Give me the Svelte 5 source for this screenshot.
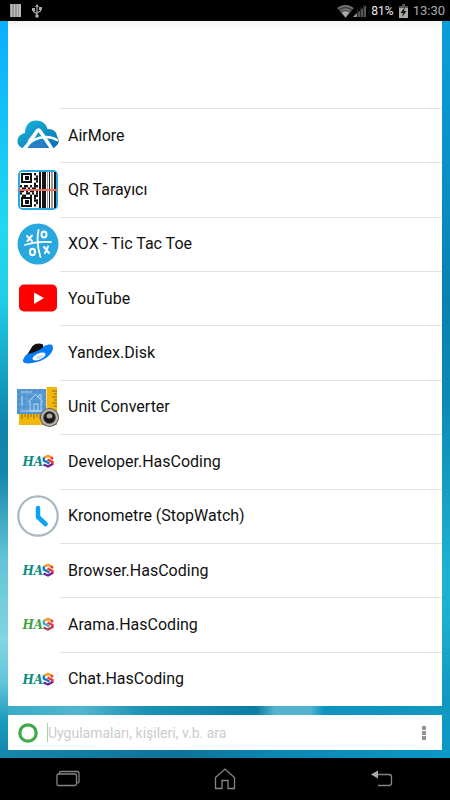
<script>
    const apps = [
        { name: 'AirMore', icon: 'airmore' },
        { name: 'QR Tarayıcı', icon: 'qr' },
        { name: 'XOX - Tic Tac Toe', icon: 'xox' },
        { name: 'YouTube', icon: 'youtube' },
        { name: 'Yandex.Disk', icon: 'disk' },
        { name: 'Unit Converter', icon: 'units' },
        { name: 'Developer.HasCoding', icon: 'has' },
        { name: 'Kronometre (StopWatch)', icon: 'clock' },
        { name: 'Browser.HasCoding', icon: 'has' },
        { name: 'Arama.HasCoding', icon: 'has-green' },
        { name: 'Chat.HasCoding', icon: 'has' }
    ];

    // Corners of the two finder squares in the QR icon
    const finders = [[4, 4], [4, 28]];

    // Loose QR modules, one string per row
    const modules = [
        '.......#..',
        '........#.',
        '.......##.',
        '........#.',
        '.......#..',
        '#.##.#.##.',
        '.##.#.##..',
        '##.#.##.#.',
        '#..##.#.#.',
        '.##..#.##.',
        '.......#..',
        '.......##.',
        '........#.',
        '.......#..'
    ];

    let query = '';
</script>

{#snippet appIcon(icon)}
    <svg class="app-icon" viewBox="0 0 42 42" aria-hidden="true">
        {#if icon === 'airmore'}
            <defs>
                <linearGradient id="cloud" x1="0" y1="0" x2="1" y2="1">
                    <stop offset="0" stop-color="#19b9dc" />
                    <stop offset="1" stop-color="#0a6cb4" />
                </linearGradient>
            </defs>
            <path fill="url(#cloud)" d="M5 34C2 32 0 30 .5 26.500C1 22 4 20 8 19C8 11 13 6.500 19 6.500C25 6.500 29 9.500 30.500 15C36 14.500 40 18 40 22.500C42 24 42 28 41 30L37 34Z" />
            <path fill="none" stroke="#a9c4d4" stroke-width="2" d="M11 27L18 19" />
            <path fill="none" stroke="#fff" stroke-width="3.500" d="M7 35C12 30 17 22 20 17Q21.500 15 23 17L35 35" />
            <path fill="none" stroke="#fff" stroke-width="2.500" d="M13 28.500C21 22.500 32 21 41 26.500" />
            <path fill="#287cc8" d="M10.500 34Q18 27 26 27L30.500 34Z" />
        {:else if icon === 'qr'}
            <rect x="1" y="1" width="40" height="40" rx="5" fill="#29a9df" />
            <rect x="3" y="3" width="36" height="36" rx="2" fill="#fff" />
            <g fill="#151515">
                {#each modules as line, row}
                    {#each line as cell, col}
                        {#if cell === '#'}
                            <rect x={3 + col * 2} y={4 + row * 2.4} width="2" height="2.400" />
                        {/if}
                    {/each}
                {/each}
            </g>
            {#each finders as [x, y]}
                <rect {x} {y} width="11" height="10" fill="#111" />
                <rect x={x + 2} y={y + 2} width="7" height="6" fill="#fff" />
                <rect x={x + 4} y={y + 3} width="4" height="4" fill="#111" />
            {/each}
            <path fill="#151515" d="M22 3H24V39H22ZM25 3H29V39H25ZM32 3H33V39H32ZM37 3H39V39H37Z" />
            <path fill="#999" d="M30 3H31V39H30ZM34 3H36V39H34Z" />
            <rect x="1" y="20" width="40" height="2" fill="#f36b5c" />
        {:else if icon === 'xox'}
            <circle cx="21" cy="21" r="20.500" fill="#29a7df" />
            <g fill="none" stroke="#fff" stroke-width="1.800" stroke-linecap="round">
                <path d="M21.500 7Q19 20 23.500 34M8 22Q20 18 34 19" />
                <path stroke-width="2" d="M10 13L15 18M15 12.500L10.500 18M27 24L32 30M31 23.500L28 30" />
                <ellipse cx="27" cy="11.500" rx="2.500" ry="3" stroke-width="2" />
                <ellipse cx="15.500" cy="29" rx="2.500" ry="3.200" stroke-width="2" />
            </g>
        {:else if icon === 'youtube'}
            <rect x="2" y="7.500" width="38" height="27" rx="5" fill="#f00" />
            <path fill="#fff" d="M17 15.500V27L27 21Z" />
        {:else if icon === 'disk'}
            <path fill="#101010" d="M10 23L15.500 14Q20 10 26 12.500L27 18Z" />
            <path fill="#087cf5" d="M35.500 13.500C38 19 31 27 20 30C11 32.500 5 31.500 6 28C7 25.500 8 24 10 22C17 21 24 18 28 13.500C32 12 34.500 12 35.500 13.500Z" />
            <ellipse cx="22" cy="24.500" rx="7" ry="3" fill="#fff" transform="rotate(-24 22 24.500)" />
            <ellipse cx="22.500" cy="25" rx="3.500" ry="1.500" fill="#bdddfa" transform="rotate(-24 22.5 25)" />
        {:else if icon === 'units'}
            <path fill="#f1b70c" d="M29.500 1H40V39H2V27.500H29.500Z" />
            <path fill="none" stroke="#8d6a0c" stroke-width="1" d="M35 5H40M37 8H40M35 11H40M37 14H40M35 17H40M37 20H40M5 28V33M8 28V31M11 28V33M14 28V31M17 28V33M20 28V31M23 28V33" />
            <rect x="0" y="3" width="29" height="25" fill="#4f94cf" />
            <path fill="none" stroke="#79b1e0" stroke-width=".5" d="M0 8H29M0 13H29M0 18H29M0 23H29M5 3V28M10 3V28M15 3V28M20 3V28M25 3V28" />
            <path fill="none" stroke="#cde6fa" stroke-width=".8" d="M4 6H15M5 10V20M11 16L18.500 8.500L26 16M13 15V25H24V15M17 25V18H21V25M22 11V9H24V13M3 25H28" />
            <circle cx="32.500" cy="31.500" r="9.500" fill="#5c5855" />
            <circle cx="32.500" cy="31.500" r="7.500" fill="none" stroke="#bbb6b0" stroke-width="2" />
            <circle cx="32.500" cy="31.500" r="5.500" fill="#191817" />
            <ellipse cx="32.500" cy="30" rx="3" ry="2.500" fill="#aaa6a2" />
        {:else if icon === 'clock'}
            <circle cx="21" cy="21" r="19.700" fill="#fff" stroke="#a9b7c1" stroke-width="2.200" />
            <path fill="none" stroke="#09a5f4" stroke-width="4.500" stroke-linejoin="round" stroke-linecap="round" d="M21 13V22L28.500 29" />
        {:else}
            <text class="logo-text" class:green={icon === 'has-green'} x="5.500" y="26">HA</text>
            <g fill="none" stroke-width="2.400">
                <path stroke="#f59a20" d="M26.500 18L31 15.800L35.500 18" />
                <path stroke="#e53b38" d="M34 17.500L36 19M30.500 19.500L35.500 22V25" />
                <path stroke="#1777c9" class:soft={icon === 'has-green'} d="M26.800 17.500V20.500L32.500 23.500" />
                <path stroke="#6b229b" class:muted={icon === 'has-green'} d="M35.500 24L31 26.500L26.500 24.500" />
            </g>
        {/if}
    </svg>
{/snippet}

<div class="phone">
    <header class="status-bar">
        <div class="status-group">
            <svg width="11" height="13" viewBox="0 0 11 13" aria-hidden="true">
                <rect width="11" height="13" fill="#777" />
                <path stroke="#bbb" stroke-width="2" d="M1.500 0V13M4.500 0V13M7.500 0V13M10 0V13" />
            </svg>
            <svg width="10" height="14" viewBox="0 0 10 14" aria-hidden="true">
                <path fill="none" stroke="#aaa" stroke-width="1.200" d="M5 2V12M1.500 5V7.500L5 10M8.500 4V7L5 9" />
                <path fill="#aaa" d="M5 0L7 3H3ZM0 4H3V7H0ZM7 3H10V6H7Z" />
                <circle cx="5" cy="12" r="1.800" fill="#aaa" />
            </svg>
        </div>
        <div class="status-group right">
            <svg width="29" height="14" viewBox="0 0 29 14" aria-hidden="true">
                <path fill="#444" d="M0 4Q8 -2 17 4L8.500 14Z" />
                <path fill="none" stroke="#777" stroke-width="1.500" d="M1 4.500Q8.500 -1 16 4.500M3.500 7Q8.500 3.500 13.500 7" />
                <path fill="#aaa" d="M4.500 8.500Q8.500 6 12.500 8.500L8.500 13.500Z" />
                <path fill="#555" d="M16 13L29 1V13Z" />
                <path fill="#999" d="M16 13L20 9V13Z" />
                <path stroke="#222" d="M20.500 5V13M23.500 3V13M26.500 1V13" />
            </svg>
            <span class="battery-level">81%</span>
            <svg width="9" height="14" viewBox="0 0 9 14" aria-hidden="true">
                <path fill="#555" d="M3 0H6V2H9V5H0V2H3Z" />
                <path fill="#aaa" d="M0 4H9V14H0Z" />
                <path fill="#111" d="M6 3L1.500 9H4L3 13L7.500 7H5Z" />
            </svg>
            <time>13:30</time>
        </div>
    </header>

    <main class="wallpaper">
        <ul class="app-list">
            {#each apps as app}
                <li>
                    <button class="app-row">
                        {@render appIcon(app.icon)}
                        <span class="app-name">{app.name}</span>
                    </button>
                </li>
            {/each}
        </ul>

        <form class="search-bar" on:submit|preventDefault>
            <svg width="20" height="20" viewBox="0 0 20 20" aria-hidden="true">
                <circle cx="10" cy="10" r="8.200" fill="none" stroke="#43aa4b" stroke-width="3.200" />
            </svg>
            <input type="text" bind:value={query} placeholder="Uygulamaları, kişileri, v.b. ara" aria-label="Uygulamaları, kişileri, v.b. ara" />
            <button type="button" class="more" aria-label="Menü">
                <svg width="4" height="14" viewBox="0 0 4 14">
                    <path fill="#949494" d="M0 0H4V4H0ZM0 5H4V9H0ZM0 10H4V14H0Z" />
                </svg>
            </button>
        </form>
    </main>

    <nav class="nav-bar">
        <button aria-label="Son uygulamalar">
            <svg width="24" height="22" viewBox="0 0 24 22">
                <path fill="none" stroke="#858585" stroke-width="1.300" d="M2.500 6H19Q20.500 6 20.500 7.500V15.500Q20.500 17.500 19 17.500H2.500Q1 17.500 1 16V7.500Q1 6 2.500 6ZM3.500 6V4.500Q3.500 3.500 5 3.500H21Q23 3.500 23 5V13.500Q23 15 20.500 15" />
            </svg>
        </button>
        <button aria-label="Ana ekran">
            <svg width="24" height="22" viewBox="0 0 24 22">
                <path fill="none" stroke="#858585" stroke-width="1.300" d="M2.500 9.500L12 1L21.500 9.500V20.500H15V12.500H9V20.500H2.500Z" />
            </svg>
        </button>
        <button aria-label="Geri">
            <svg width="24" height="22" viewBox="0 0 24 22">
                <path fill="none" stroke="#858585" stroke-width="1.300" d="M6 6.500H19Q21.500 6.500 21.500 9V15Q21.500 17.500 19 17.500H8" />
                <path fill="#aaa" d="M1 6.500L8 2.500V10.500Z" />
            </svg>
        </button>
    </nav>
</div>

<style>
    :global(body) {
        background: #000;
    }

    .phone {
        display: flex;
        flex-direction: column;
        min-height: 100vh;
        font-family: Roboto, "Noto Sans", sans-serif;
    }

    button {
        padding: 0;
        border: none;
        background: none;
        font: inherit;
        cursor: pointer;
    }

    svg {
        display: block;
        flex: none;
    }

    .status-bar {
        display: flex;
        align-items: center;
        justify-content: space-between;
        height: 21px;
        padding: 0 5px 0 10px;
        background: #000;
        color: #aaa;
    }

    .status-group {
        display: flex;
        align-items: center;
        gap: 11px;
    }

    .status-group.right {
        gap: 5px;
    }

    .battery-level {
        color: #eee;
        font-size: 12px;
    }

    time {
        font-size: 13px;
    }

    /* Blue wallpaper, seen only around the edges of the cards */
    .wallpaper {
        flex: 1;
        display: flex;
        flex-direction: column;
        gap: 9px;
        padding: 0 8px 8px;
        background:
            linear-gradient(#0aaeff 0%, #12bdf8 10%, #22d8f1 28%, #20cde8 38%, #0f83ab 55%, #1386ac 61%, #62c4d6 73%, #82d5e1 84%, #60c4d8 90%, #1b9abd 95%, #1485aa 100%) left / 8px 100% no-repeat,
            linear-gradient(#0a9ddb 0%, #0a90c8 20%, #0881b0 38%, #0b8ab5 52%, #1eb0d2 74%, #1eb0d2 80%, #1198c0 92%, #0a98c8 100%) right / 8px 100% no-repeat,
            linear-gradient(90deg, #1787ac, #0c7399 40%, #0b86b2 60%, #0a98c8) bottom / 100% 10px no-repeat,
            linear-gradient(90deg, #35abc8, #53b6cd 18%, #1b91b5 32%, #0b7da5 57%, #53b3d0 61%, #53b3d0 69%, #0d93bf 72%, #1198c0);
    }

    .app-list {
        flex: 1;
        display: flex;
        flex-direction: column;
        margin: 0;
        padding: 87px 0 0;
        background: linear-gradient(#f4f4f4, #fff 8px);
        list-style: none;
    }

    li {
        flex: 1 0 54px;
        display: flex;
    }

    .app-row {
        flex: 1;
        display: flex;
        align-items: center;
        gap: 9px;
        padding-left: 9px;
        background: linear-gradient(#e2e2e2, #e2e2e2) 52px 0 / 100% 1px no-repeat;
        text-align: left;
    }

    .app-icon {
        width: 42px;
        height: 42px;
    }

    .app-name {
        color: #111;
        font-size: 16px;
    }

    .logo-text {
        fill: #0b8d80;
        font: italic bold 12px "DejaVu Serif", serif;
    }

    .logo-text.green {
        fill: #3da63f;
    }

    .soft {
        stroke: #51a8c0;
    }

    .muted {
        stroke: #b0404c;
    }

    .search-bar {
        display: flex;
        align-items: center;
        height: 35px;
        padding: 0 16px 0 10px;
        background: #fff;
    }

    input {
        flex: 1;
        min-width: 0;
        height: 19px;
        margin-left: 9px;
        padding: 0;
        border: none;
        border-left: 1px solid #a3d3a7;
        outline: none;
        background: none;
        color: #111;
        font: inherit;
        font-size: 14px;
    }

    input::placeholder {
        color: #ccc;
        opacity: 1;
    }

    .nav-bar {
        display: flex;
        align-items: center;
        justify-content: space-between;
        height: 42px;
        padding: 0 56px;
        background: #000;
    }
</style>
